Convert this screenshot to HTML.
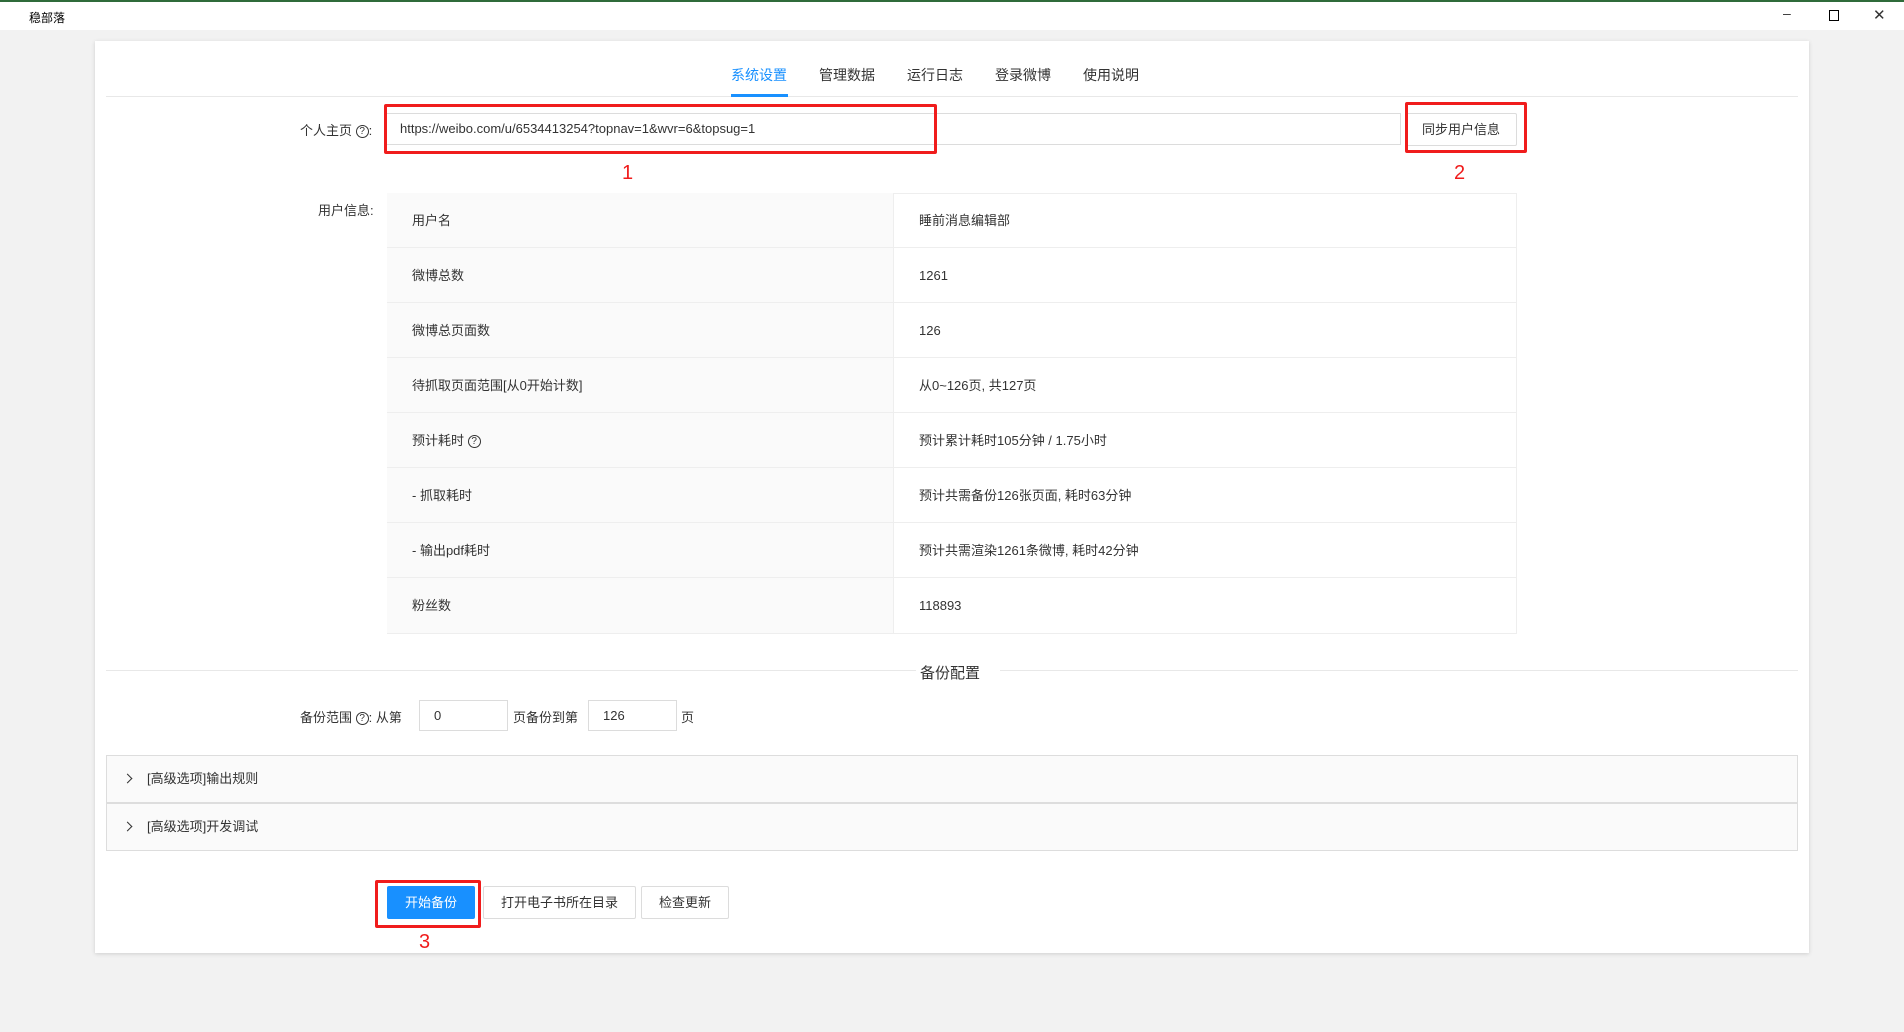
<!DOCTYPE html>
<html><head><meta charset="utf-8"><style>
*{box-sizing:border-box;margin:0;padding:0}
body{width:1904px;height:1032px;background:#f2f2f2;font-family:"Liberation Sans","Noto Sans CJK SC",sans-serif;font-size:13px;color:#333;position:relative;overflow:hidden}
.a{position:absolute}
.title{left:0;top:0;width:1904px;height:30px;background:#fff;border-top:2px solid #2f6b3a}
.card{left:95px;top:41px;width:1714px;height:912px;background:#fff;box-shadow:0 1px 4px rgba(0,0,0,.15)}
.tab{top:65px;font-size:14px;color:#333}
.inp{border:1px solid #dcdcdc;background:#fff;height:32px;line-height:30px;padding-left:14px;font-size:13px}
.btn{border:1px solid #dcdcdc;background:#fff;height:33px;line-height:31px;text-align:center;font-size:13px;border-radius:2px}
.red{border:3px solid #f01c1c;border-radius:2px}
.num{color:#f01c1c;font-size:20px}
.row{position:absolute;left:387px;width:1130px;height:55px;border-bottom:1px solid #eee;line-height:55px;font-size:13px}
.row .l{position:absolute;left:0;width:507px;height:100%;background:#fafafa;padding-left:25px;border-right:1px solid #eee}
.row .r{position:absolute;left:507px;padding-left:25px}
.q{display:inline-block;width:13px;height:13px;border:1px solid #333;border-radius:50%;font-size:10px;line-height:11px;text-align:center;vertical-align:middle}
.col{left:106px;width:1692px;height:48px;background:#fafafa;border:1px solid #ddd;line-height:46px;padding-left:40px;font-size:13px}
.col:before{content:"";position:absolute;left:17px;top:19px;width:6px;height:6px;border-right:1.3px solid #333;border-top:1.3px solid #333;transform:rotate(45deg)}
</style></head><body>
<div class="a title"><span class="a" style="left:29px;top:7px;font-size:12px;color:#000">稳部落</span>
<span class="a" style="left:1783px;top:3px;font-size:14px">–</span>
<span class="a" style="left:1829px;top:8px;width:10px;height:11px;border:1.3px solid #000"></span>
<span class="a" style="left:1873px;top:4px;font-size:15px">✕</span></div>
<div class="a card"></div>
<div class="a" style="left:106px;top:96px;width:1692px;height:1px;background:#e8e8e8"></div>
<span class="a tab" style="left:731px;color:#1890ff">系统设置</span>
<div class="a" style="left:731px;top:94px;width:57px;height:3px;background:#1890ff"></div>
<span class="a tab" style="left:819px">管理数据</span>
<span class="a tab" style="left:907px">运行日志</span>
<span class="a tab" style="left:995px">登录微博</span>
<span class="a tab" style="left:1083px">使用说明</span>

<span class="a" style="left:300px;top:120px">个人主页 <span class="q">?</span>:</span>
<div class="a inp" style="left:385px;top:113px;width:1016px">https://weibo.com/u/6534413254?topnav=1&amp;wvr=6&amp;topsug=1</div>
<div class="a btn" style="left:1405px;top:113px;width:112px">同步用户信息</div>
<div class="a red" style="left:384px;top:104px;width:553px;height:50px"></div>
<div class="a red" style="left:1405px;top:102px;width:122px;height:51px"></div>
<span class="a num" style="left:622px;top:162px">1</span>
<span class="a num" style="left:1454px;top:162px">2</span>

<span class="a" style="left:318px;top:200px">用户信息:</span>
<div class="a" style="left:387px;top:193px;width:1130px;height:441px;border:1px solid #eee"></div>
<div class="row" style="top:193px"><div class="l">用户名</div><div class="r">睡前消息编辑部</div></div>
<div class="row" style="top:248px"><div class="l">微博总数</div><div class="r">1261</div></div>
<div class="row" style="top:303px"><div class="l">微博总页面数</div><div class="r">126</div></div>
<div class="row" style="top:358px"><div class="l">待抓取页面范围[从0开始计数]</div><div class="r">从0~126页, 共127页</div></div>
<div class="row" style="top:413px"><div class="l">预计耗时 <span class="q">?</span></div><div class="r">预计累计耗时105分钟 / 1.75小时</div></div>
<div class="row" style="top:468px"><div class="l">- 抓取耗时</div><div class="r">预计共需备份126张页面, 耗时63分钟</div></div>
<div class="row" style="top:523px"><div class="l">- 输出pdf耗时</div><div class="r">预计共需渲染1261条微博, 耗时42分钟</div></div>
<div class="row" style="top:578px;border-bottom:none"><div class="l">粉丝数</div><div class="r">118893</div></div>

<div class="a" style="left:106px;top:670px;width:810px;height:1px;background:#e8e8e8"></div>
<div class="a" style="left:1000px;top:670px;width:798px;height:1px;background:#e8e8e8"></div>
<span class="a" style="left:920px;top:662px;font-size:15px">备份配置</span>

<span class="a" style="left:300px;top:707px">备份范围 <span class="q">?</span>: 从第</span>
<div class="a inp" style="left:419px;top:700px;width:89px;height:31px">0</div>
<span class="a" style="left:513px;top:707px">页备份到第</span>
<div class="a inp" style="left:588px;top:700px;width:89px;height:31px">126</div>
<span class="a" style="left:681px;top:707px">页</span>

<div class="a col" style="top:755px">[高级选项]输出规则</div>
<div class="a col" style="top:803px">[高级选项]开发调试</div>

<div class="a btn" style="left:387px;top:886px;width:88px;background:#1890ff;border-color:#1890ff;color:#fff">开始备份</div>
<div class="a btn" style="left:483px;top:886px;width:153px">打开电子书所在目录</div>
<div class="a btn" style="left:641px;top:886px;width:88px">检查更新</div>
<div class="a red" style="left:375px;top:880px;width:106px;height:48px"></div>
<span class="a num" style="left:419px;top:931px">3</span>
</body></html>
